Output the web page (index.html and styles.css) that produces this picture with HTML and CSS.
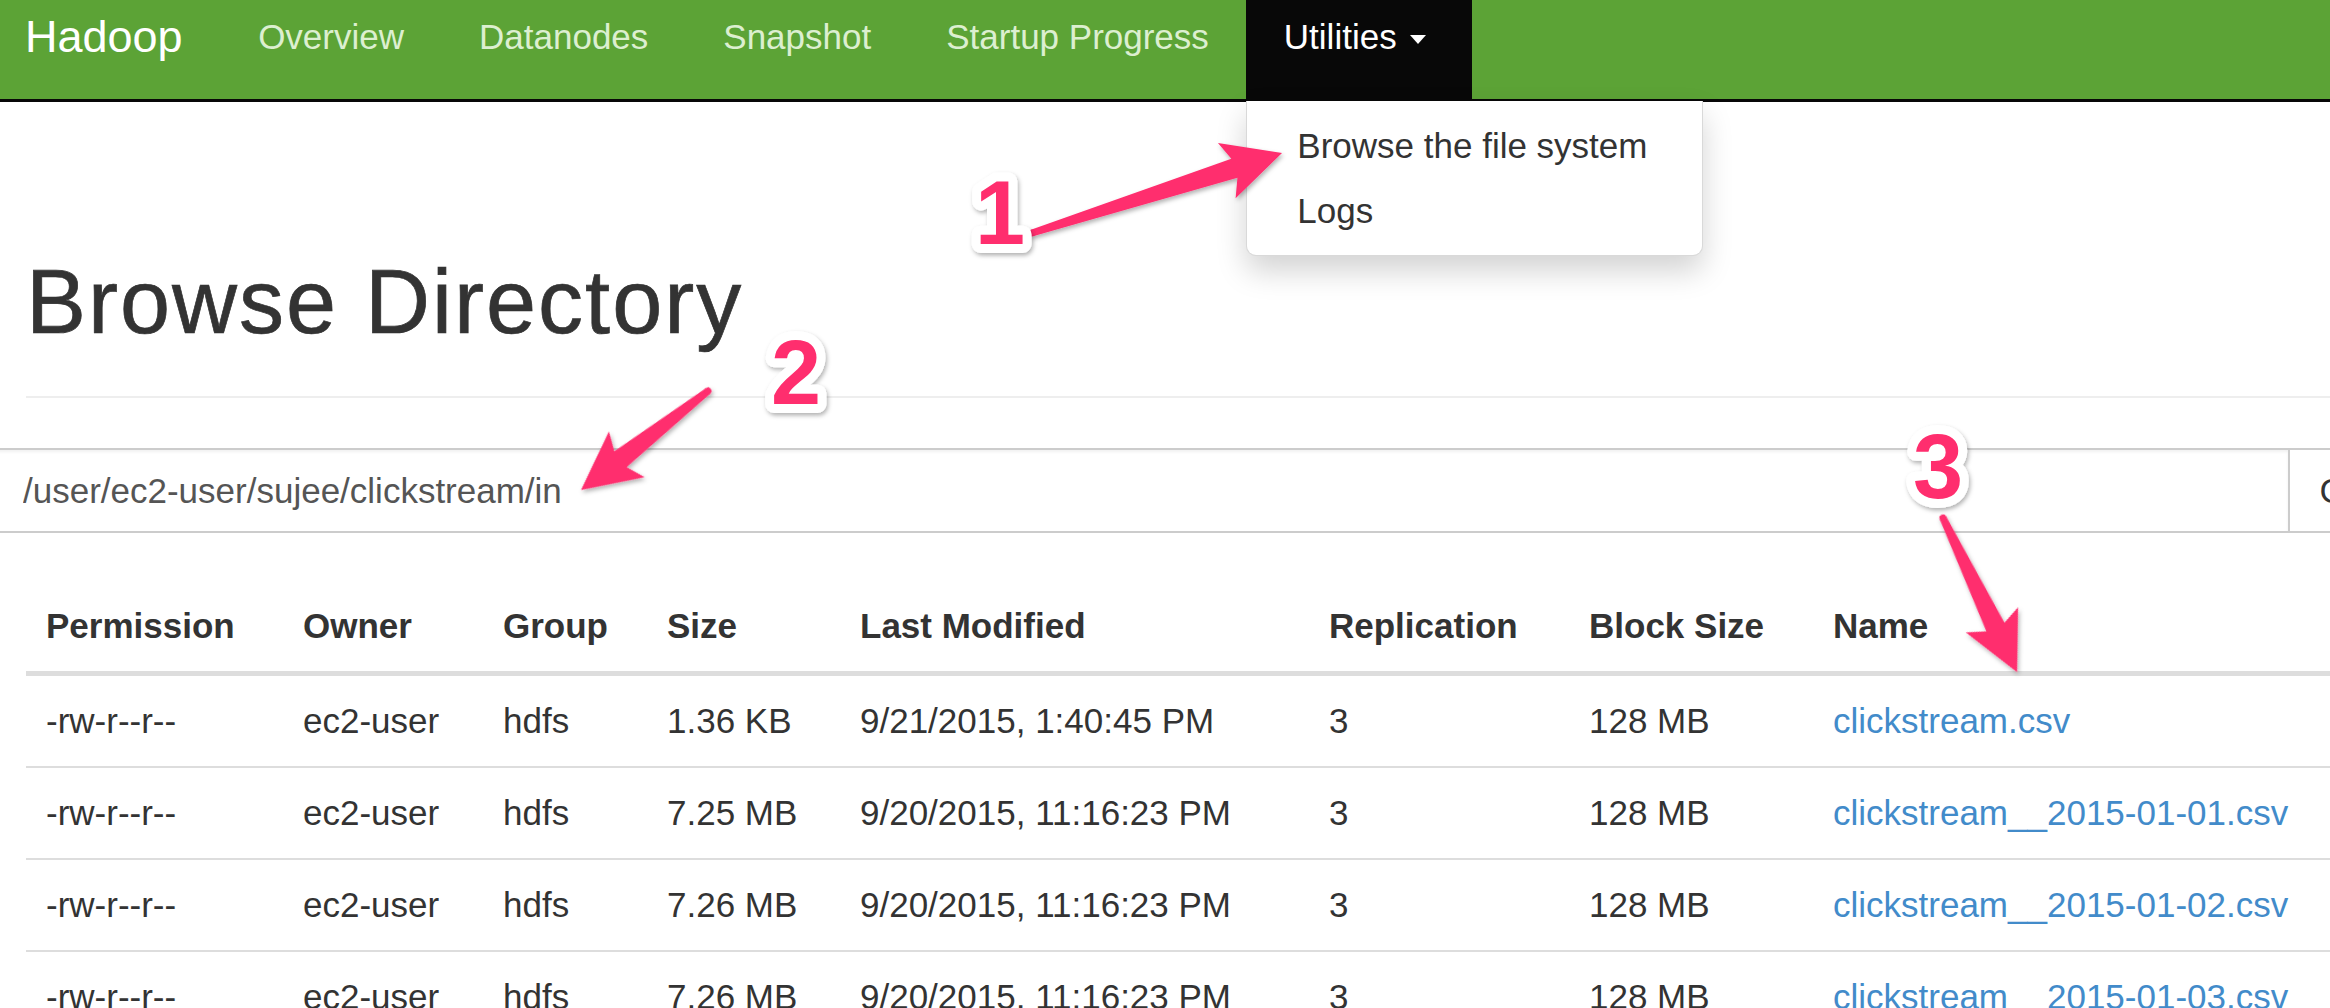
FILE: index.html
```html
<!DOCTYPE html>
<html lang="en">
<head>
<meta charset="utf-8">
<title>Browsing HDFS</title>
<link rel="stylesheet" href="styles.css">
</head>
<body>
<nav class="navbar">
  <a class="brand" href="#">Hadoop</a>
  <ul class="nav">
    <li><a href="#">Overview</a></li>
    <li><a href="#">Datanodes</a></li>
    <li><a href="#">Snapshot</a></li>
    <li><a href="#">Startup Progress</a></li>
    <li class="dropdown">
      <a class="dropdown-toggle" href="#">Utilities <b class="caret"></b></a>
      <ul class="dropdown-menu">
        <li><a href="#">Browse the file system</a></li>
        <li><a href="#">Logs</a></li>
      </ul>
    </li>
  </ul>
</nav>

<div class="container">
  <div class="page-header"><h1>Browse Directory</h1></div>

  <div class="search">
    <input class="path-input" type="text" value="/user/ec2-user/sujee/clickstream/in">
    <button class="go-btn" type="button">Go!</button>
  </div>

  <table class="listing">
    <colgroup>
      <col class="c-perm"><col class="c-owner"><col class="c-group"><col class="c-size">
      <col class="c-mod"><col class="c-repl"><col class="c-block"><col class="c-name">
    </colgroup>
    <thead>
      <tr><th>Permission</th><th>Owner</th><th>Group</th><th>Size</th><th>Last Modified</th><th>Replication</th><th>Block Size</th><th>Name</th></tr>
    </thead>
    <tbody>
      <tr><td>-rw-r--r--</td><td>ec2-user</td><td>hdfs</td><td>1.36 KB</td><td>9/21/2015, 1:40:45 PM</td><td>3</td><td>128 MB</td><td><a href="#">clickstream.csv</a></td></tr>
      <tr><td>-rw-r--r--</td><td>ec2-user</td><td>hdfs</td><td>7.25 MB</td><td>9/20/2015, 11:16:23 PM</td><td>3</td><td>128 MB</td><td><a href="#">clickstream__2015-01-01.csv</a></td></tr>
      <tr><td>-rw-r--r--</td><td>ec2-user</td><td>hdfs</td><td>7.26 MB</td><td>9/20/2015, 11:16:23 PM</td><td>3</td><td>128 MB</td><td><a href="#">clickstream__2015-01-02.csv</a></td></tr>
      <tr><td>-rw-r--r--</td><td>ec2-user</td><td>hdfs</td><td>7.26 MB</td><td>9/20/2015, 11:16:23 PM</td><td>3</td><td>128 MB</td><td><a href="#">clickstream__2015-01-03.csv</a></td></tr>
    </tbody>
  </table>
</div>

<svg class="annotations" width="2330" height="1008" viewBox="0 0 2330 1008" xmlns="http://www.w3.org/2000/svg">
  <defs>
    <filter id="shadow" x="-30%" y="-30%" width="160%" height="160%">
      <feDropShadow dx="1.5" dy="2.5" stdDeviation="2" flood-color="#000" flood-opacity="0.3"/>
    </filter>
  </defs>
  <g class="arrow" filter="url(#shadow)">
    <g transform="translate(1032,233) rotate(-17.74)">
      <path d="M0,-3.5 L212.5,-10 L204.5,-29 L262.5,0 L204.5,29 L212.5,10 L0,3.5 Z"/>
      <circle cx="0" cy="0" r="3.5"/>
    </g>
    <g transform="translate(708,391) rotate(142.06)">
      <path d="M0,-3.5 L111,-10 L103,-29 L161,0 L103,29 L111,10 L0,3.5 Z"/>
      <circle cx="0" cy="0" r="3.5"/>
    </g>
    <g transform="translate(1943,518) rotate(64.33)">
      <path d="M0,-3.5 L121,-10 L113,-29 L171,0 L113,29 L121,10 L0,3.5 Z"/>
      <circle cx="0" cy="0" r="3.5"/>
    </g>
  </g>
  <g class="num" filter="url(#shadow)">
    <text x="1000" y="244">1</text>
    <text x="796" y="404">2</text>
    <text x="1938" y="498">3</text>
  </g>
</svg>
</body>
</html>
```

FILE: styles.css
```css
* { box-sizing: border-box; }

html, body {
  margin: 0;
  padding: 0;
}

body {
  width: 2330px;
  height: 1008px;
  overflow: hidden;
  position: relative;
  background: #fff;
  color: #333;
  font-family: "Liberation Sans", Arial, "Helvetica Neue", Helvetica, sans-serif;
  font-size: 35px;
  line-height: 50px;
}

a { text-decoration: none; }

/* ---------- navbar ---------- */
.navbar {
  display: flex;
  align-items: flex-start;
  height: 102px;
  background: #5ca336;
  border-bottom: 3px solid #080808;
  position: relative;
  z-index: 5;
}

.brand {
  display: block;
  padding: 12px 38px 0 25px;
  font-size: 45px;
  line-height: 50px;
  color: #fff;
}

.nav {
  display: flex;
  list-style: none;
  margin: 0;
  padding: 0;
}

.nav > li > a {
  display: block;
  padding: 12px 37.5px 37px;
  line-height: 50px;
  font-size: 35px;
  color: #dcefd0;
}

.dropdown {
  position: relative;
  background: #080808;
}

.nav > li > .dropdown-toggle {
  color: #fff;
  padding-right: 46px;
}

.caret {
  display: inline-block;
  width: 0;
  height: 0;
  margin-left: 4px;
  vertical-align: middle;
  border-top: 9px solid #fff;
  border-left: 8.5px solid transparent;
  border-right: 8.5px solid transparent;
}

.dropdown-menu {
  position: absolute;
  top: 101px;
  left: 0;
  width: 457px;
  margin: 0;
  padding: 12px 0;
  list-style: none;
  background: #fff;
  border: 1px solid rgba(0, 0, 0, 0.15);
  border-top: 0;
  border-radius: 0 0 10px 10px;
  box-shadow: 0 15px 30px rgba(0, 0, 0, 0.175);
}

.dropdown-menu a {
  display: block;
  padding: 7.5px 50px;
  line-height: 50px;
  color: #333;
  white-space: nowrap;
}

/* ---------- content ---------- */
.container {
  padding-left: 26px;
}

.page-header {
  margin-top: 151px;
  padding-bottom: 44px;
  border-bottom: 2px solid #eee;
  width: 2304px;
}

.page-header h1 {
  margin: 0;
  font-size: 90px;
  line-height: 99px;
  font-weight: 500;
  letter-spacing: 2px;
  -webkit-text-stroke: 0.7px #333;
  color: #333;
}

.search {
  display: flex;
  margin-top: 50px;
  margin-left: -35px;
  height: 85px;
}

.path-input {
  flex: none;
  width: 2299px;
  height: 85px;
  margin: 0;
  padding: 0 20px 0 30px;
  border: 2.5px solid #ccc;
  border-radius: 0;
  font-family: "Liberation Sans", Arial, sans-serif;
  font-size: 35px;
  color: #555;
  background: #fff;
  box-shadow: inset 0 2px 3px rgba(0, 0, 0, 0.06);
  outline: none;
}

.go-btn {
  flex: none;
  width: 130px;
  height: 85px;
  margin: 0 0 0 -2.5px;
  padding: 0 0 0 30px;
  text-align: left;
  border: 2.5px solid #ccc;
  border-radius: 0;
  background: #fff;
  font-family: "Liberation Sans", Arial, sans-serif;
  font-size: 35px;
  color: #333;
}

.listing {
  margin-top: 48px;
  width: 2304px;
  table-layout: fixed;
  border-collapse: collapse;
  border-spacing: 0;
}

.c-perm  { width: 257px; }
.c-owner { width: 200px; }
.c-group { width: 164px; }
.c-size  { width: 193px; }
.c-mod   { width: 469px; }
.c-repl  { width: 260px; }
.c-block { width: 244px; }
.c-name  { width: 517px; }

.listing th,
.listing td {
  padding: 20px;
  line-height: 50px;
  text-align: left;
  vertical-align: top;
  white-space: nowrap;
}

.listing th {
  font-weight: bold;
  border-bottom: 5px solid #ddd;
}

.listing td {
  border-top: 2px solid #ddd;
}

.listing tbody tr:first-child td {
  border-top: 0;
}

.listing a {
  color: #428bca;
}

/* ---------- annotations (overlay) ---------- */
.annotations {
  position: absolute;
  top: 0;
  left: 0;
  z-index: 20;
  pointer-events: none;
}

.arrow path,
.arrow circle {
  fill: #ff2d6e;
}

.num text {
  font-family: "Liberation Sans", Arial, sans-serif;
  font-weight: bold;
  font-size: 90px;
  text-anchor: middle;
  fill: #ff2d6e;
  stroke: #fff;
  stroke-width: 18px;
  stroke-linejoin: round;
  paint-order: stroke;
}
```
